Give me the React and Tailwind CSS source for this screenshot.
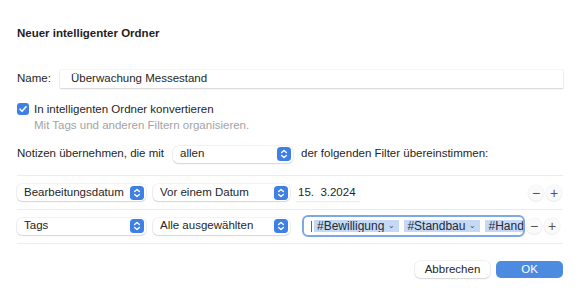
import React from "react";

// Blaues Auf/Ab-Symbol der macOS-Popup-Menüs
const Stepper = () => (
  <svg width="14" height="14" viewBox="0 0 14 14" className="shrink-0">
    <rect x="0" y="0" width="14" height="14" rx="3.5" fill="#3f80e4" />
    <path
      d="M4.6 5.6 L7 3.4 L9.4 5.6 M4.6 8.4 L7 10.6 L9.4 8.4"
      fill="none"
      stroke="#fff"
      strokeWidth="1.3"
      strokeLinecap="round"
      strokeLinejoin="round"
    />
  </svg>
);

const Popup = ({ label, className }) => (
  <div
    className={`flex items-center justify-between h-[17px] rounded-[5px] bg-white pl-[7px] pr-[2px] shadow-[0_0_0_0.5px_rgba(0,0,0,0.1),0_1px_1.5px_rgba(0,0,0,0.12)] ${className}`}
  >
    <span className="truncate">{label}</span>
    <Stepper />
  </div>
);

const RoundButton = ({ children }) => (
  <div className="flex items-center justify-center w-[16px] h-[16px] rounded-full bg-[#fafafa] shadow-[0_0_0_0.5px_rgba(0,0,0,0.06),0_1px_1px_rgba(0,0,0,0.06)] text-[#555] text-[14px] leading-[16px]">
    {children}
  </div>
);

const Token = ({ label }) => (
  <div className="flex items-center h-[12px] bg-[#c6d9f4] pl-[3px] pr-[4px] shrink-0 text-[#1f2a3a] text-[12px]">
    <span>{label}</span>
    <span className="ml-[4px] text-[8px] text-[#4a5568]">⌄</span>
  </div>
);

const App = () => {
  return (
    <div
      className="w-[580px] h-[288px] bg-white px-[17px] pt-[26px] text-[11.5px] text-[#262626] overflow-hidden"
      style={{ fontFamily: '"Liberation Sans", Arial, sans-serif' }}
    >
      <h1 className="font-bold leading-[14px] text-[11.5px] text-[#1e1e1e]">
        Neuer intelligenter Ordner
      </h1>

      <div className="mt-[30px] flex items-center h-[18px]">
        <span className="w-[43px] shrink-0">Name:</span>
        <div className="flex-1 h-[18px] flex items-center pl-[11px] bg-white shadow-[0_0_0_0.5px_rgba(0,0,0,0.08),0_1px_1.5px_rgba(0,0,0,0.14)]">
          Überwachung Messestand
        </div>
      </div>

      <div className="mt-[15px] flex items-center h-[12px] leading-[12px]">
        <svg width="12" height="12" viewBox="0 0 12 12" className="shrink-0">
          <rect width="12" height="12" rx="3" fill="#3f80e4" />
          <path
            d="M3 6.2 L5.1 8.3 L9 3.8"
            fill="none"
            stroke="#fff"
            strokeWidth="1.6"
            strokeLinecap="round"
            strokeLinejoin="round"
          />
        </svg>
        <span className="ml-[5px]">In intelligenten Ordner konvertieren</span>
      </div>
      <div className="mt-[4px] pl-[17px] leading-[12px] text-[#a3a3a3]">
        Mit Tags und anderen Filtern organisieren.
      </div>

      <div className="mt-[14px] flex items-center h-[18px]">
        <span className="w-[156px] shrink-0">Notizen übernehmen, die mit</span>
        <Popup label="allen" className="w-[120px]" />
        <span className="ml-[8px]">der folgenden Filter übereinstimmen:</span>
      </div>

      <div className="mt-[12px] h-px bg-[#ececec]" />

      <div className="mt-[8px] flex items-center h-[17px]">
        <Popup label="Bearbeitungsdatum" className="w-[129px]" />
        <Popup label="Vor einem Datum" className="w-[137px] ml-[7px]" />
        <div className="ml-[6px] w-[64px] h-[17px] flex items-center pl-[2px] bg-white shadow-[0_1px_1px_rgba(0,0,0,0.08)] whitespace-pre">
          {"15.  3.2024"}
        </div>
        <div className="flex-1" />
        <div className="flex items-center gap-[2px] mr-[1px]">
          <RoundButton>−</RoundButton>
          <RoundButton>+</RoundButton>
        </div>
      </div>

      <div className="mt-[8px] h-px bg-[#ececec]" />

      <div className="mt-[5px] flex items-center h-[22px]">
        <Popup label="Tags" className="w-[129px]" />
        <Popup label="Alle ausgewählten" className="w-[137px] ml-[7px]" />
        <div className="ml-[12px] w-[223px] h-[22px] rounded-[6px] border-[2.5px] border-[#7ea7e6] bg-white flex items-center pl-[7px] overflow-hidden">
          <div className="w-px h-[11px] bg-[#2f6fd6] shrink-0 mr-[2px]" />
          <div className="flex items-center gap-[5px] overflow-hidden flex-1 min-w-0">
            <Token label="#Bewilligung" />
            <Token label="#Standbau" />
            {/* letztes Tag, vom Feldrand abgeschnitten */}
            <div className="flex items-center h-[12px] bg-[#c6d9f4] pl-[3px] pr-[1px] shrink-0 text-[#1f2a3a] text-[12px]">
              #Hand
            </div>
          </div>
        </div>
        <div className="flex-1" />
        <div className="flex items-center gap-[2px] mr-[3px]">
          <RoundButton>−</RoundButton>
          <RoundButton>+</RoundButton>
        </div>
      </div>

      <div className="mt-[6px] h-px bg-[#ececec]" />

      <div className="mt-[17px] flex justify-end gap-[6px]">
        <button className="w-[75px] h-[17px] rounded-[5px] bg-white shadow-[0_0_0_0.5px_rgba(0,0,0,0.1),0_1px_1.5px_rgba(0,0,0,0.12)] text-[#262626]">
          Abbrechen
        </button>
        <button className="w-[67px] h-[17px] rounded-[5px] bg-[#4c8be0] text-white">
          OK
        </button>
      </div>
    </div>
  );
};

export default App;
